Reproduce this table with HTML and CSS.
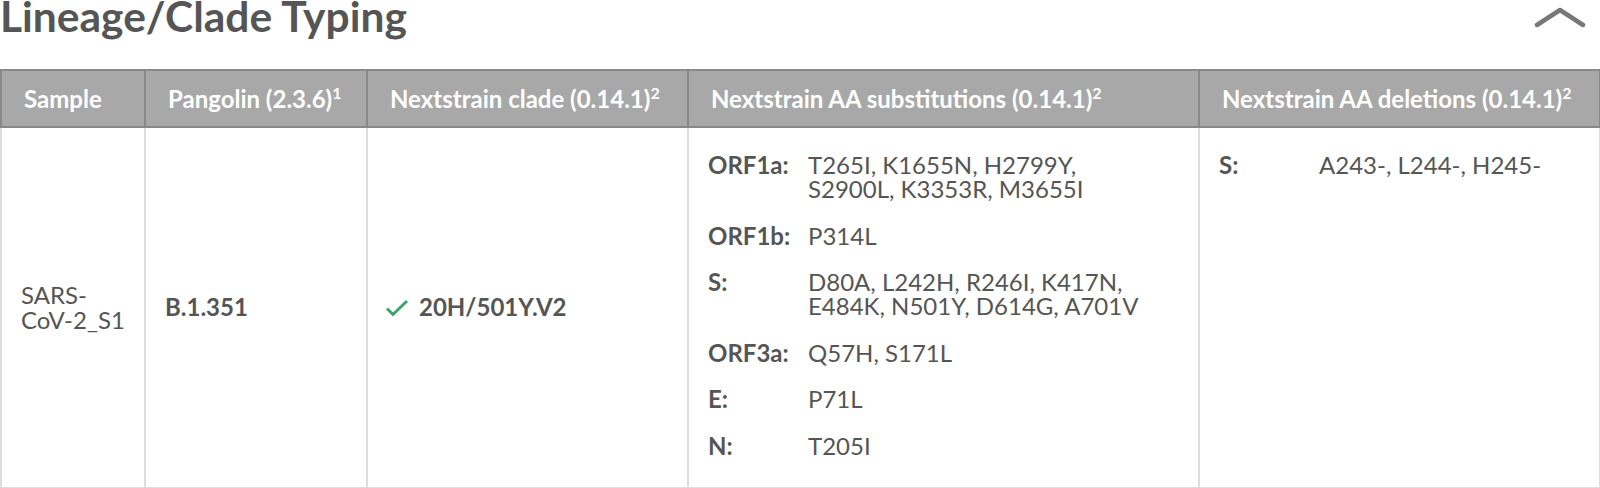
FILE: index.html
```html
<!DOCTYPE html>
<html lang="en">
<head>
<meta charset="utf-8">
<title>Lineage/Clade Typing</title>
<link rel="stylesheet" href="styles.css">
</head>
<body>
<section class="panel">
  <header class="panel-head">
    <h2 class="panel-title">Lineage/Clade Typing</h2>
    <button class="collapse-btn" aria-label="Collapse">
      <svg width="52" height="22" viewBox="0 0 52 22"><polyline points="3,19 26,4 49,19" fill="none" stroke="#777" stroke-width="4.5" stroke-linecap="round" stroke-linejoin="round"/></svg>
    </button>
  </header>
  <table class="typing">
    <colgroup>
      <col class="c1"><col class="c2"><col class="c3"><col class="c4"><col class="c5">
    </colgroup>
    <thead>
      <tr>
        <th>Sample</th>
        <th>Pangolin (2.3.6)<sup>1</sup></th>
        <th>Nextstrain clade (0.14.1)<sup>2</sup></th>
        <th>Nextstrain AA substitutions (0.14.1)<sup>2</sup></th>
        <th>Nextstrain AA deletions (0.14.1)<sup>2</sup></th>
      </tr>
    </thead>
    <tbody>
      <tr>
        <td class="sample">SARS-<br>CoV-2_S1</td>
        <td class="bold">B.1.351</td>
        <td class="bold clade"><svg class="check" width="24" height="18" viewBox="0 0 24 18"><polyline points="2,9.5 8,15.5 22,2" fill="none" stroke="#3aa56f" stroke-width="3"/></svg>20H/501Y.V2</td>
        <td class="muts">
          <dl class="mutlist">
            <dt>ORF1a:</dt><dd>T265I, K1655N, H2799Y, S2900L, K3353R, M3655I</dd>
            <dt>ORF1b:</dt><dd>P314L</dd>
            <dt>S:</dt><dd>D80A, L242H, R246I, K417N, E484K, N501Y, D614G, A701V</dd>
            <dt>ORF3a:</dt><dd>Q57H, S171L</dd>
            <dt>E:</dt><dd>P71L</dd>
            <dt>N:</dt><dd>T205I</dd>
          </dl>
        </td>
        <td class="muts top">
          <dl class="mutlist">
            <dt>S:</dt><dd>A243-, L244-, H245-</dd>
          </dl>
        </td>
      </tr>
    </tbody>
  </table>
</section>
</body>
</html>
```
FILE: styles.css
```css
html, body {
  margin: 0;
  padding: 0;
  background: #fff;
}
body {
  font-family: Lato, "Open Sans", sans-serif;
  color: #555;
}
.panel-head {
  display: flex;
  justify-content: space-between;
  align-items: flex-start;
}
.panel-title {
  margin: -10px 0 0 0;
  font-size: 42.5px;
  font-weight: 700;
  line-height: 51px;
  color: #555;
}
.collapse-btn {
  margin: 6px 14px 0 0;
  padding: 0;
  border: 0;
  background: none;
  line-height: 0;
}
.typing {
  margin-top: 28px;
  width: 1599px;
  border-collapse: collapse;
  table-layout: fixed;
}
.c1 { width: 144px; }
.c2 { width: 222px; }
.c3 { width: 321px; }
.c4 { width: 511px; }
.c5 { width: 401px; }
.typing th {
  background: #a8a8a8;
  color: #fff;
  font-size: 24px;
  font-weight: 700;
  text-align: left;
  padding: 0 22px;
  height: 55px;
  border: 2px solid #888;
  white-space: nowrap;
}
.typing sup {
  font-size: 16px;
  line-height: 0;
  vertical-align: 9px;
}
.typing td {
  border: 2px solid #ddd;
  padding: 0 19px;
  font-size: 24px;
  line-height: 24px;
  vertical-align: middle;
  color: #555;
}
.typing td.sample {
  line-height: 25px;
}
.typing td.bold {
  font-weight: 700;
}
.clade .check {
  vertical-align: -1px;
  margin-right: 10px;
  margin-left: -2px;
}
.typing td.top {
  vertical-align: top;
}
.typing td.muts {
  padding: 25px 19px 29px 19px;
}
.mutlist {
  margin: 0;
  display: grid;
  grid-template-columns: 100px 1fr;
  row-gap: 22.5px;
}
.mutlist dt {
  font-weight: 700;
}
.mutlist dd {
  margin: 0;
  max-width: 345px;
}
```
